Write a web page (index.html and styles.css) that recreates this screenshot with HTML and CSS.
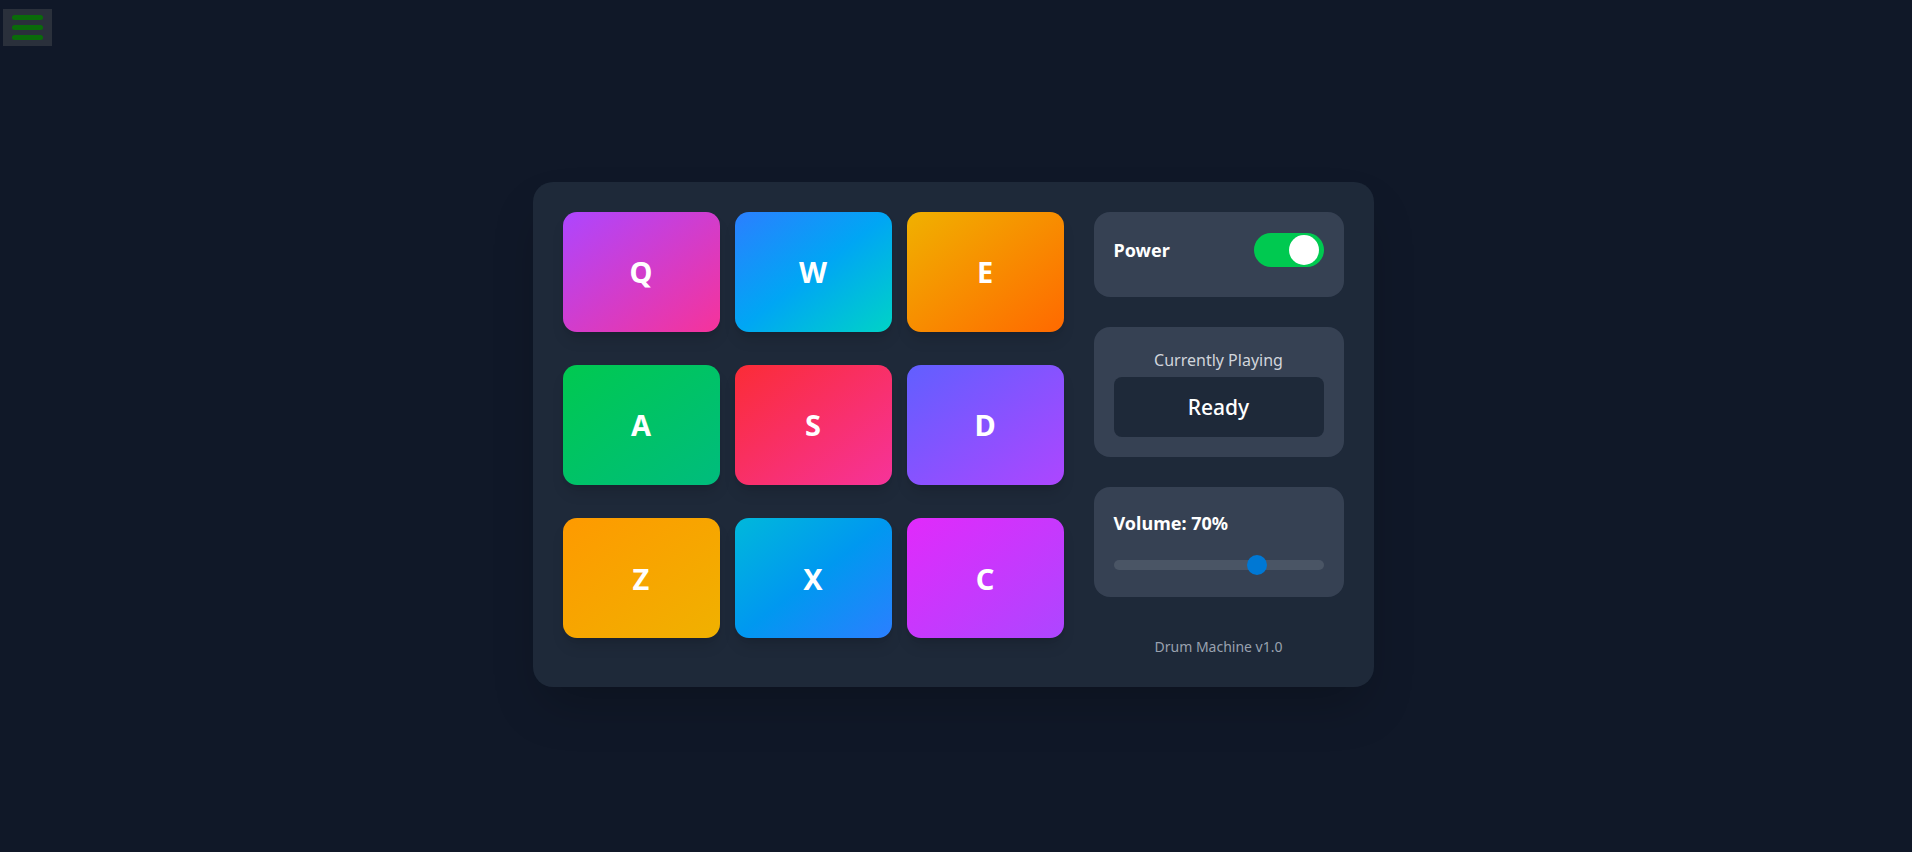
FILE: index.html
```html
<!DOCTYPE html>
<html lang="en">
<head>
<meta charset="utf-8">
<title>Drum Machine</title>
<link rel="stylesheet" href="styles.css">
</head>
<body>
<button class="menu-btn" aria-label="Menu">
  <span class="bar"></span><span class="bar"></span><span class="bar"></span>
</button>
<main class="page">
  <section class="machine">
    <div class="pads">
      <button class="pad pad-q">Q</button>
      <button class="pad pad-w">W</button>
      <button class="pad pad-e">E</button>
      <button class="pad pad-a">A</button>
      <button class="pad pad-s">S</button>
      <button class="pad pad-d">D</button>
      <button class="pad pad-z">Z</button>
      <button class="pad pad-x">X</button>
      <button class="pad pad-c">C</button>
    </div>
    <div class="controls">
      <div class="panel power-panel">
        <span class="label">Power</span>
        <span class="toggle"><span class="knob"></span></span>
      </div>
      <div class="panel display-panel">
        <div class="display-title">Currently Playing</div>
        <div class="display">Ready</div>
      </div>
      <div class="panel volume-panel">
        <div class="label">Volume: 70%</div>
        <div class="slider">
          <div class="thumb" style="left: calc((100% - 20px) * 0.7)"></div>
        </div>
      </div>
      <div class="footer">Drum Machine v1.0</div>
    </div>
  </section>
</main>
</body>
</html>
```
FILE: styles.css
```css
html, body {
  background: #101828;
}
body {
  margin: 8px;
  font-family: "Noto Sans", "Open Sans", sans-serif;
  color: #ffffff;
}
.menu-btn {
  position: absolute;
  left: 3px;
  top: 9px;
  width: 49px;
  height: 37px;
  padding: 0;
  border: none;
  background: #2a303b;
  display: flex;
  flex-direction: column;
  align-items: center;
  justify-content: center;
  gap: 5px;
}
.menu-btn .bar {
  display: block;
  width: 31px;
  height: 5px;
  border-radius: 3px;
  background: #0a6b0a;
}
.page {
  min-height: 100vh;
  display: flex;
  align-items: center;
  justify-content: center;
  padding-right: 6px;
}
.machine {
  display: flex;
  gap: 30px;
  padding: 30px;
  background: #1e2939;
  border-radius: 20px;
  box-shadow: 0 25px 50px -12px rgba(0, 0, 0, 0.25);
}
.pads {
  display: grid;
  grid-template-columns: repeat(3, 157px);
  grid-template-rows: repeat(3, 1fr);
  column-gap: 15px;
  row-gap: 15px;
}
.pad {
  align-self: start;
  height: 120px;
  border: none;
  border-radius: 14px;
  color: #ffffff;
  font-family: "Noto Sans", "Open Sans", sans-serif;
  font-size: 29px;
  font-weight: 700;
  box-shadow: 0 10px 15px -3px rgba(0, 0, 0, 0.12), 0 4px 6px -4px rgba(0, 0, 0, 0.12);
}
.pad-q { background: linear-gradient(to bottom right, #ad46ff, #f6339a); }
.pad-w { background: linear-gradient(to bottom right, #2b7fff, #00a6f4, #00d3c6); }
.pad-e { background: linear-gradient(to bottom right, #f0b100, #ff6900); }
.pad-a { background: linear-gradient(to bottom right, #00c950, #00bc7d); }
.pad-s { background: linear-gradient(to bottom right, #fb2c36, #f6339a); }
.pad-d { background: linear-gradient(to bottom right, #615fff, #ad46ff); }
.pad-z { background: linear-gradient(to bottom right, #fe9a00, #f0b100); }
.pad-x { background: linear-gradient(to bottom right, #00b8db, #0098f0, #2b7fff); }
.pad-c { background: linear-gradient(to bottom right, #e12afb, #ad46ff); }

.controls {
  width: 250px;
  display: flex;
  flex-direction: column;
  gap: 30px;
}
.panel {
  background: #364153;
  border-radius: 16px;
  padding: 20px;
  box-sizing: border-box;
}
.label {
  font-size: 18px;
  font-weight: 700;
  line-height: 28px;
}
.power-panel {
  height: 85px;
  padding-top: 21px;
  display: flex;
  align-items: flex-start;
  justify-content: space-between;
}
.power-panel .label {
  line-height: 34px;
}
.toggle {
  position: relative;
  width: 70px;
  height: 34px;
  border-radius: 17px;
  background: #00c950;
}
.knob {
  position: absolute;
  left: 35px;
  top: 2px;
  width: 30px;
  height: 30px;
  border-radius: 50%;
  background: #ffffff;
}
.display-panel {
  height: 130px;
  display: flex;
  flex-direction: column;
  align-items: center;
}
.display-title {
  font-size: 16px;
  line-height: 24px;
  color: #d1d5dc;
  margin-top: 1px;
  margin-bottom: 5px;
}
.display {
  align-self: stretch;
  height: 60px;
  border-radius: 8px;
  background: #1e2939;
  display: flex;
  align-items: center;
  justify-content: center;
  font-size: 21px;
  font-weight: 500;
}
.volume-panel {
  height: 110px;
}
.volume-panel .label {
  margin-top: 2px;
}
.slider {
  position: relative;
  margin-top: 23px;
  height: 10px;
  border-radius: 5px;
  background: #4a5565;
}
.thumb {
  position: absolute;
  top: -5px;
  width: 20px;
  height: 20px;
  border-radius: 50%;
  background: #0078d4;
}
.footer {
  padding-top: 10px;
  text-align: center;
  font-size: 14px;
  line-height: 20px;
  color: #99a1af;
}
```
